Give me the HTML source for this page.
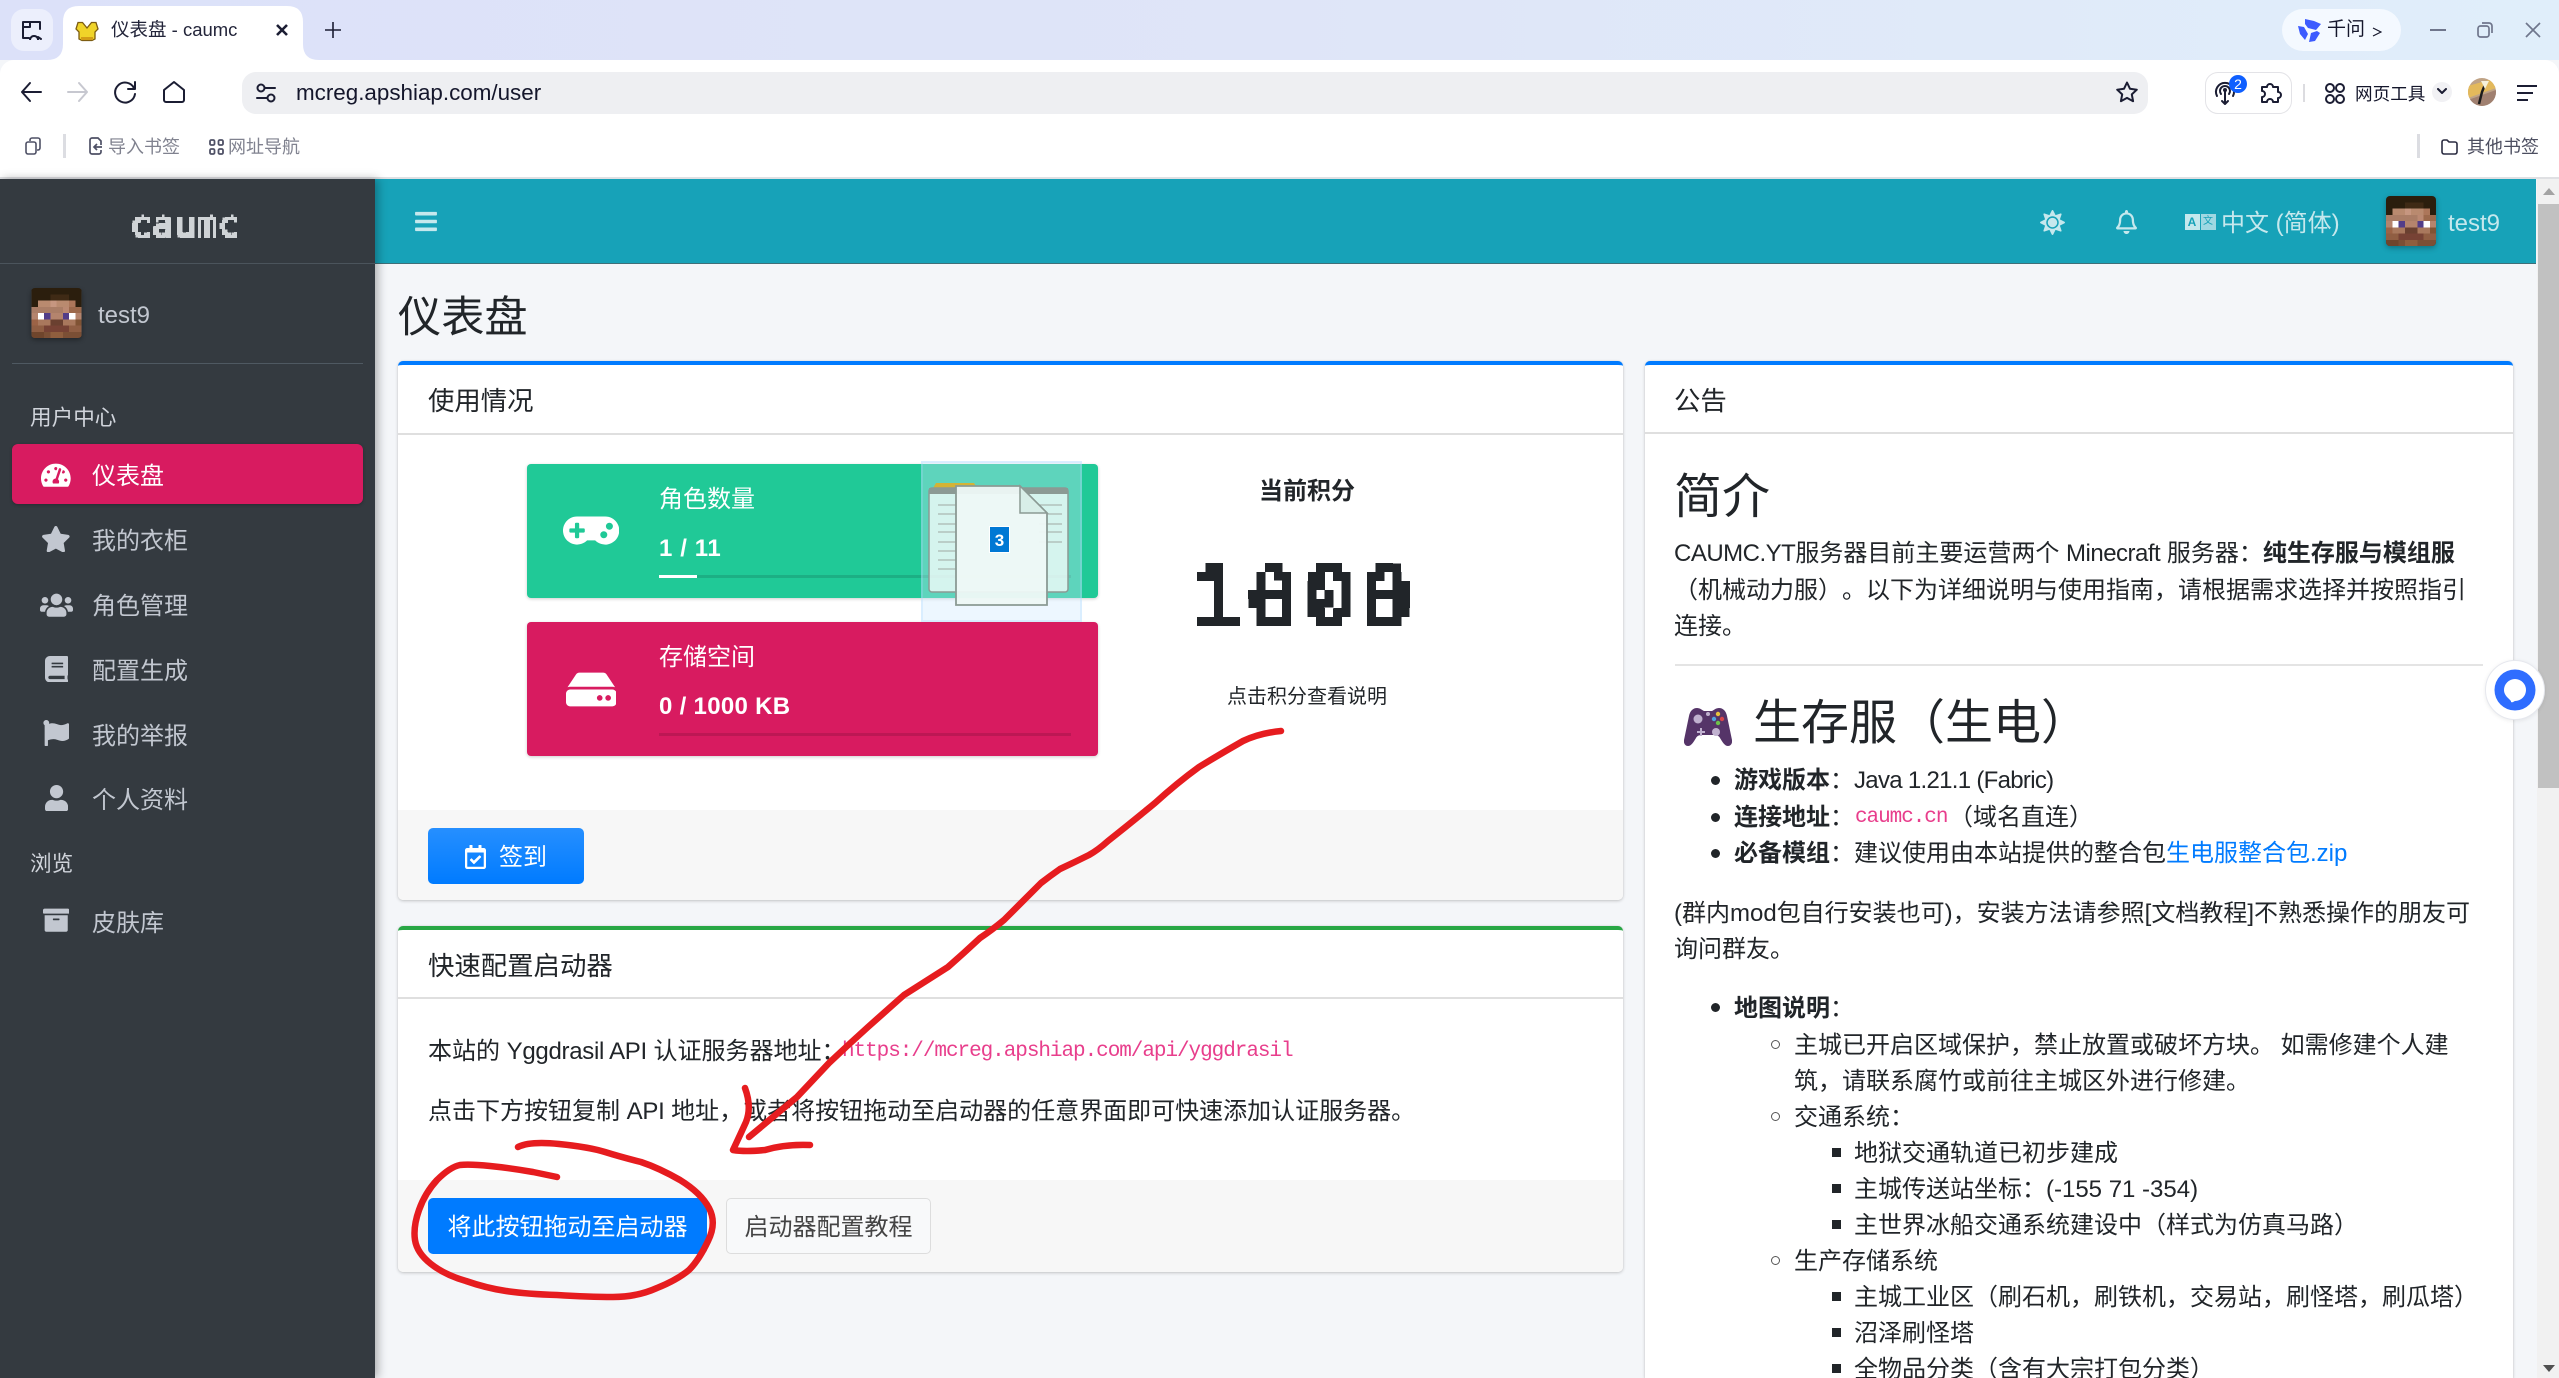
<!DOCTYPE html>
<html lang="zh-CN"><head><meta charset="utf-8"><title>仪表盘 - caumc</title>
<style>
html,body{margin:0;padding:0;background:#f4f6f9;width:2559px;height:1378px;overflow:hidden}
#p{position:relative;width:2559px;height:1378px;overflow:hidden;font-family:"Liberation Sans","Noto Sans CJK SC",sans-serif;color:#212529;font-size:24px;background:#f4f6f9;text-spacing-trim:space-all}
#p div,#p svg,#p span.a{position:absolute}
.t{white-space:nowrap;line-height:36px;height:36px;margin-top:2px;margin-left:-1px}
.c{margin-left:0}
.side{color:#c2c7d0}
.m{font-family:"Liberation Mono",monospace;color:#e83e8c;font-size:21px;letter-spacing:-1.05px}
.l{letter-spacing:-.5px}
.j{letter-spacing:-.7px}
.y{letter-spacing:-.3px}
b{font-weight:700}
.card{background:#fff;border-radius:5px;box-shadow:0 0 1px rgba(0,0,0,.13),0 1px 3px rgba(0,0,0,.2);box-sizing:border-box;overflow:hidden}
.foot{background:#f7f7f7;left:0;right:0}
.hl{left:0;right:0;height:1.5px;background:#dfdfdf}
.dot{width:9px;height:9px;border-radius:50%;background:#212529}
.ring{width:9px;height:9px;border-radius:50%;border:1.5px solid #555;box-sizing:border-box}
.sq{width:9px;height:9px;background:#212529}
.ct{color:#80828f;font-size:18px;line-height:30px;height:30px;white-space:nowrap}
.ch{fill:none;stroke:#1b1d33;stroke-width:2;stroke-linecap:round;stroke-linejoin:round}
</style></head><body><div id="p">
<svg width="0" height="0" style="left:0;top:0">
<defs>
<symbol id="steve" viewBox="0 0 8 8" shape-rendering="crispEdges">
<rect width="8" height="8" fill="#2b1e0d"/>
<rect x="3" y="1" width="3" height="1" fill="#3f2a15"/>
<rect x="1" y="2" width="6" height="1" fill="#b98a6f"/><rect x="3" y="2" width="1" height="1" fill="#c69680"/><rect x="6" y="2" width="1" height="1" fill="#ac765a"/>
<rect y="3" width="8" height="1" fill="#aa7d66"/><rect x="5" y="3" width="1" height="1" fill="#bb8972"/><rect x="6" y="3" width="2" height="1" fill="#9c694c"/>
<rect y="4" width="8" height="1" fill="#b4846d"/><rect x="1" y="4" width="1" height="1" fill="#fff"/><rect x="2" y="4" width="1" height="1" fill="#523d89"/><rect x="5" y="4" width="1" height="1" fill="#523d89"/><rect x="6" y="4" width="1" height="1" fill="#fff"/>
<rect y="5" width="8" height="1" fill="#a9785d"/><rect x="3" y="5" width="2" height="1" fill="#6a4030"/><rect x="7" y="5" width="1" height="1" fill="#805334"/><rect y="5" width="1" height="1" fill="#9c6346"/>
<rect y="6" width="8" height="1" fill="#905e43"/><rect x="2" y="6" width="4" height="1" fill="#774235"/>
<rect y="7" width="8" height="1" fill="#7b4f35"/><rect x="0" y="7" width="2" height="1" fill="#6f452c"/><rect x="3" y="7" width="2" height="1" fill="#8f5e3e"/>
</symbol>
<filter id="px9" x="-5%" y="-5%" width="110%" height="110%" color-interpolation-filters="sRGB">
<feFlood x="4" y="4" width="1" height="1" flood-color="#000"/><feComposite width="9" height="9"/><feTile result="a"/>
<feComposite in="SourceGraphic" in2="a" operator="in"/><feComponentTransfer><feFuncA type="discrete" tableValues="0 1 1"/></feComponentTransfer><feMorphology operator="dilate" radius="4"/>
</filter>
<filter id="px3" x="-5%" y="-5%" width="110%" height="110%" color-interpolation-filters="sRGB">
<feFlood x="1" y="1" width="1" height="1" flood-color="#000"/><feComposite width="3" height="3"/><feTile result="a"/>
<feComposite in="SourceGraphic" in2="a" operator="in"/><feComponentTransfer><feFuncA type="discrete" tableValues="0 1 1"/></feComponentTransfer><feMorphology operator="dilate" radius="1"/>
</filter>
</defs>
</svg>

<!-- browser chrome -->
<div style="left:0;top:0;width:2559px;height:60px;background:linear-gradient(90deg,#dce1f9 0%,#dfe5f8 50%,#e0eefa 100%)"></div>
<div style="left:11px;top:9px;width:42px;height:42px;background:#eceffc;border-radius:13px"></div>
<svg style="left:20px;top:20px" width="24" height="20" viewBox="0 0 24 20"><path class="ch" d="M9 18H3V2h17v7M3 7h7V2M14 16a4 4 0 1 0 .1 0M18 17l3 2" fill="none"/></svg>
<div style="left:0;top:60px;width:2559px;height:118px;background:#fff;border-radius:14px 14px 0 0"></div>
<svg style="left:45px;top:6px" width="276" height="56" viewBox="0 0 276 56"><path fill="#fff" d="M0 54H2Q18 54 18 38V16Q18 0 34 0H242Q258 0 258 16V38Q258 54 274 54H276V56H0Z"/></svg>
<svg style="left:75px;top:21px" width="24" height="21" viewBox="0 0 24 21"><path fill="#f0d429" stroke="#7d5d12" stroke-width="1.300" d="M3 1.500h4.500L12 7l4.500-5.500H21l2 6.500-3 3v7l-3 1.500H7l-3-1.500v-7L1 8z"/><path fill="#d39e16" d="M6 16h12v3H6z"/></svg>
<div class="t c" style="left:111px;top:10px;font-size:18.5px;color:#23253a;width:127px;overflow:hidden">仪表盘 - caumc</div>
<svg style="left:275px;top:23px" width="14" height="14"><path d="M2 2l10 10M12 2L2 12" stroke="#1b1d33" stroke-width="2.6" fill="none"/></svg>
<svg style="left:324px;top:21px" width="18" height="18"><path d="M9 1v16M1 9h16" stroke="#1b1d33" stroke-width="1.6" fill="none"/></svg>

<svg style="left:20px;top:80px" width="22" height="24"><path class="ch" d="M21 12H2M10 3l-8 9 8 9"/></svg>
<svg style="left:67px;top:80px" width="22" height="24"><path class="ch" style="stroke:#c7c8d0" d="M1 12h19M12 3l8 9-8 9"/></svg>
<svg style="left:114px;top:80px" width="24" height="24"><path class="ch" d="M20 8a10 10 0 1 0 1 6M21 2v7h-7"/></svg>
<svg style="left:162px;top:80px" width="24" height="24"><path class="ch" d="M2 10l10-8 10 8v10a2 2 0 0 1-2 2H4a2 2 0 0 1-2-2z"/></svg>
<div style="left:242px;top:72px;width:1906px;height:42px;background:#eeeff2;border-radius:14px"></div>
<svg style="left:256px;top:83px" width="20" height="20"><g class="ch" stroke-width="1.8"><circle cx="5" cy="5" r="3.5"/><path d="M9 5h10M1 15h10"/><circle cx="15" cy="15" r="3.5"/></g></svg>
<div class="t c" style="left:296px;top:73px;font-size:22.4px;color:#14162b">mcreg.apshiap.com/user</div>
<svg style="left:2116px;top:81px" width="22" height="22" viewBox="0 0 22 22"><path class="ch" d="M11 1.5l3 6.3 6.8.9-5 4.7 1.3 6.8-6.1-3.3-6.1 3.3 1.3-6.8-5-4.7 6.8-.9z"/></svg>
<div style="left:2205px;top:72px;width:87px;height:42px;border:1.5px solid #e3e3e7;border-radius:13px;box-sizing:border-box"></div>
<svg style="left:2212px;top:80px" width="28" height="26" viewBox="0 0 28 26"><g class="ch" stroke-width="1.7"><path d="M5 16a9 9 0 1 1 16 0M9 14a5 5 0 1 1 8 0M13 10v14M10 21l3 3 3-3"/></g><circle cx="13" cy="10" r="2" fill="#1b1d33"/></svg>
<div style="left:2229px;top:75px;width:18px;height:18px;border-radius:50%;background:#0f5fff;color:#fff;font-size:14px;line-height:18px;text-align:center">2</div>
<svg style="left:2260px;top:80px" width="24" height="24" viewBox="0 0 24 24"><path class="ch" d="M2 7h5a3 3 0 1 1 6 0h5v5a3 3 0 1 1 0 6v4h-5a3 3 0 1 0-6 0H2v-5a3 3 0 1 0 0-6z" stroke-width="2"/></svg>
<div style="left:2303px;top:84px;width:1.5px;height:18px;background:#dcdce0"></div>
<svg style="left:2325px;top:82px" width="20" height="24"><g class="ch" stroke-width="2"><circle cx="5" cy="6" r="4"/><circle cx="15" cy="6" r="4"/><circle cx="5" cy="17" r="4"/><circle cx="15" cy="17" r="4"/></g></svg>
<div class="t c" style="left:2355px;top:74px;font-size:17.6px;color:#14162b">网页工具</div>
<div style="left:2432px;top:82px;width:20px;height:20px;border-radius:50%;background:#f1f1f4"></div>
<svg style="left:2437px;top:88px" width="10" height="8"><path d="M1 1l4 4 4-4" class="ch"/></svg>
<svg style="left:2468px;top:78px" width="28" height="28" viewBox="0 0 28 28"><defs><clipPath id="av"><circle cx="14" cy="14" r="14"/></clipPath></defs><g clip-path="url(#av)"><rect width="28" height="28" fill="#bfa386"/><path d="M0 8L28 0v10L0 20z" fill="#e3b95c"/><path d="M0 22L28 12v16H0z" fill="#a08070"/><path d="M18 4l-4 10-3 12" stroke="#1c1c1c" stroke-width="2.5" fill="none"/><path d="M13 3h8l-4 8z" fill="#f5f1da"/></g></svg>
<svg style="left:2516px;top:84px" width="22" height="18"><path d="M1 2h20M1 9h16M1 16h11" stroke="#1b1d33" stroke-width="2" fill="none"/></svg>

<div style="left:2282px;top:9px;width:119px;height:42px;background:#f4f9ff;border-radius:21px"></div>
<svg style="left:2297px;top:18px" width="24" height="24" viewBox="0 0 24 24"><path fill="#3d5bff" d="M8 1l9 2 7 3-5 6-8-2-3-4zM1 8l6 1 4 7-3 6-5-6zM14 15l6-2 3 2-5 8-6 1z"/></svg>
<div class="t c" style="left:2327px;top:10px;font-size:19px;color:#14162b">千问</div>
<svg style="left:2372px;top:27px" width="10" height="10"><path d="M1 1l8 4-8 4" fill="none" stroke="#14162b" stroke-width="1.2"/></svg>
<div style="left:2430px;top:29px;width:16px;height:2px;background:#6f768c"></div>
<svg style="left:2477px;top:22px" width="16" height="16"><g fill="none" stroke="#6f768c" stroke-width="1.7"><rect x="1" y="4" width="11" height="11" rx="2.5"/><path d="M5 1h7a3 3 0 0 1 3 3v7"/></g></svg>
<svg style="left:2525px;top:22px" width="16" height="16"><path d="M1 1l14 14M15 1L1 15" stroke="#6f768c" stroke-width="1.7"/></svg>

<svg style="left:25px;top:137px" width="16" height="18"><g fill="none" stroke="#4f5166" stroke-width="1.6"><rect x="1" y="5" width="10" height="12" rx="2" fill="#fff"/><path d="M5 4V3a2 2 0 0 1 2-2h6a2 2 0 0 1 2 2v8a2 2 0 0 1-2 2h-1"/></g></svg>
<div style="left:63px;top:134px;width:2.5px;height:24px;background:#dcdde2"></div>
<svg style="left:89px;top:137px" width="14" height="18"><path fill="none" stroke="#4f5166" stroke-width="1.7" d="M12 8V4L9 1H3a2 2 0 0 0-2 2v12a2 2 0 0 0 2 2h7a2 2 0 0 0 2-2v-2M13 10H6M8 7l-3 3 3 3"/></svg>
<div class="ct" style="left:108px;top:132px">导入书签</div>
<svg style="left:209px;top:139px" width="15" height="16"><g fill="none" stroke="#4f5166" stroke-width="1.8"><rect x="1" y="1" width="4.5" height="5" rx="1.3"/><rect x="9.5" y="1" width="4.5" height="5" rx="1.3"/><rect x="1" y="10" width="4.5" height="5" rx="1.3"/><rect x="9.5" y="10" width="4.5" height="5" rx="1.3"/></g></svg>
<div class="ct" style="left:228px;top:132px">网址导航</div>
<div style="left:2417px;top:134px;width:2.5px;height:24px;background:#dcdde2"></div>
<svg style="left:2441px;top:139px" width="17" height="16"><path fill="none" stroke="#2b2d42" stroke-width="1.6" d="M1 3a2 2 0 0 1 2-2h3l2 2h6a2 2 0 0 1 2 2v8a2 2 0 0 1-2 2H3a2 2 0 0 1-2-2z"/></svg>
<div class="ct" style="left:2467px;top:132px;color:#4c4e60">其他书签</div>
<div style="left:0;top:177px;width:2559px;height:2px;background:#dfe0e3"></div>

<!-- scrollbar -->
<div style="left:2537px;top:179px;width:22px;height:1199px;background:#f1f1f1"></div>
<div style="left:2538px;top:204px;width:21px;height:584px;background:#c1c1c1"></div>
<svg style="left:2542px;top:187px" width="14" height="9"><path d="M7 1l6 7H1z" fill="#a3a3a3"/></svg>
<svg style="left:2542px;top:1364px" width="14" height="9"><path d="M1 1h12L7 8z" fill="#505050"/></svg>

<!-- header -->
<div style="left:375px;top:179px;width:2161px;height:85px;background:#17a2b8;border-bottom:1.5px solid #3f6f78;box-sizing:border-box"></div>
<svg style="left:415px;top:209px" width="22" height="25" viewBox="0 0 448 512"><path fill="#c5e8ed" d="M16 132h416c8.837 0 16-7.163 16-16V76c0-8.837-7.163-16-16-16H16C7.163 60 0 67.163 0 76v40c0 8.837 7.163 16 16 16zm0 160h416c8.837 0 16-7.163 16-16v-40c0-8.837-7.163-16-16-16H16c-8.837 0-16 7.163-16 16v40c0 8.837 7.163 16 16 16zm0 160h416c8.837 0 16-7.163 16-16v-40c0-8.837-7.163-16-16-16H16c-8.837 0-16 7.163-16 16v40c0 8.837 7.163 16 16 16z"/></svg>
<svg style="left:2039.5px;top:209.5px" width="25" height="25" viewBox="0 0 512 512"><path fill="#c5e8ed" d="M256 160c-52.9 0-96 43.1-96 96s43.1 96 96 96 96-43.1 96-96-43.1-96-96-96zm246.4 80.5l-94.7-47.3 33.5-100.4c4.5-13.6-8.4-26.5-21.9-21.9l-100.4 33.5-47.4-94.8c-6.4-12.8-24.6-12.8-31 0l-47.3 94.7L92.7 70.8c-13.6-4.5-26.5 8.4-21.9 21.9l33.5 100.4-94.7 47.4c-12.8 6.4-12.8 24.6 0 31l94.7 47.3-33.5 100.5c-4.5 13.6 8.4 26.5 21.9 21.9l100.4-33.5 47.3 94.7c6.4 12.8 24.6 12.8 31 0l47.3-94.7 100.4 33.5c13.6 4.5 26.5-8.4 21.9-21.9l-33.5-100.4 94.7-47.3c13-6.5 13-24.7.2-31.1zm-155.9 106c-49.9 49.9-131.1 49.9-181 0-49.9-49.9-49.9-131.1 0-181 49.9-49.9 131.1-49.9 181 0 49.9 49.9 49.9 131.1 0 181z"/></svg>
<svg style="left:2115.5px;top:210px" width="21" height="24" viewBox="0 0 448 512"><path fill="#c5e8ed" d="M439.39 362.29c-19.32-20.76-55.47-51.99-55.47-154.29 0-77.7-54.48-139.9-127.94-155.16V32c0-17.67-14.32-32-31.98-32s-31.98 14.33-31.98 32v20.84C118.56 68.1 64.08 130.3 64.08 208c0 102.3-36.15 133.53-55.47 154.29-6 6.45-8.66 14.16-8.61 21.71.11 16.4 12.98 32 32.1 32h383.8c19.12 0 32-15.6 32.1-32 .05-7.55-2.61-15.27-8.61-21.71zM67.53 368c21.22-27.97 44.42-74.33 44.53-159.42 0-.2-.06-.38-.06-.58 0-61.86 50.14-112 112-112s112 50.14 112 112c0 .2-.06.38-.06.58.11 85.1 23.31 131.46 44.53 159.42H67.53zM224 512c35.32 0 63.97-28.65 63.97-64H160.03c0 35.35 28.65 64 63.97 64z"/></svg>
<div style="left:2184.5px;top:214px;width:15px;height:16px;background:#c5e8ed;color:#17a2b8;font-size:12px;font-weight:700;line-height:16px;text-align:center">A</div>
<div style="left:2200.5px;top:214px;width:15px;height:16px;background:#9fd8e2;color:#17a2b8;font-size:10px;line-height:16px;text-align:center">文</div>
<div class="t c" style="left:2221px;top:204px;color:#c5e8ed">中文 (简体)</div>
<svg style="left:2386px;top:196px;border-radius:4px;box-shadow:0 2px 6px rgba(0,0,0,.3)" width="50" height="50"><use href="#steve" width="50" height="50"/></svg>
<div class="t c" style="left:2448px;top:204px;color:#c5e8ed">test9</div>

<!-- sidebar -->
<div style="left:0;top:179px;width:375px;height:1199px;background:#343a40;box-shadow:3px 0 9px rgba(0,0,0,.3)"></div>
<div style="left:0;top:263px;width:375px;height:1px;background:#4b545c"></div>
<svg style="left:126px;top:196px;filter:url(#px3)" width="120" height="52"><text x="4" y="41" font-family="DejaVu Sans Mono" font-size="36.5" fill="#cfd3d6" stroke="#cfd3d6" stroke-width="1.5">caumc</text></svg>
<svg style="left:31px;top:288px;border-radius:4px;box-shadow:0 2px 5px rgba(0,0,0,.35)" width="51" height="50"><use href="#steve" width="51" height="50"/></svg>
<div class="t side c" style="left:98px;top:296px">test9</div>
<div style="left:12px;top:363px;width:351px;height:1px;background:#4f5962"></div>
<div class="t c" style="left:30px;top:398px;font-size:21.6px;color:#d0d4db">用户中心</div>
<div style="left:12px;top:444px;width:351px;height:60px;background:#d81b60;border-radius:6px;box-shadow:0 1px 3px rgba(0,0,0,.25)"></div>
<svg style="left:41px;top:462px" width="29.7" height="26.4" viewBox="0 0 576 512"><path fill="#fff" d="M288 32C128.94 32 0 160.94 0 320c0 52.8 14.25 102.26 39.06 144.8 5.61 9.62 16.3 15.2 27.44 15.2h443c11.14 0 21.83-5.58 27.44-15.2C561.75 422.26 576 372.8 576 320c0-159.06-128.94-288-288-288zm0 64c14.71 0 26.58 10.13 30.32 23.65-1.11 2.26-2.64 4.23-3.45 6.67l-9.22 27.67c-5.13 3.49-10.97 6.01-17.64 6.01-17.67 0-32-14.33-32-32S270.33 96 288 96zM96 384c-17.67 0-32-14.33-32-32s14.33-32 32-32 32 14.33 32 32-14.33 32-32 32zm48-160c-17.67 0-32-14.33-32-32s14.33-32 32-32 32 14.33 32 32-14.33 32-32 32zm246.77-72.41l-61.33 184C343.13 347.33 352 364.54 352 384c0 11.72-3.38 22.55-8.88 32H232.88c-5.5-9.45-8.88-20.28-8.88-32 0-33.94 26.5-61.43 59.9-63.59l61.34-184.01c4.17-12.56 17.73-19.45 30.36-15.17 12.57 4.19 19.35 17.79 15.17 30.36zm14.66 57.2l15.52-46.55c3.47-1.29 7.13-2.23 11.05-2.23 17.67 0 32 14.33 32 32s-14.33 32-32 32c-11.38-.01-20.89-6.28-26.57-15.22zM480 384c-17.67 0-32-14.33-32-32s14.33-32 32-32 32 14.33 32 32-14.33 32-32 32z"/></svg>
<div class="t" style="left:93px;top:457px;color:#fff">仪表盘</div>
<svg style="left:41px;top:526px" width="29.7" height="26.4" viewBox="0 0 576 512"><path fill="#c2c7d0" d="M259.3 17.8L194 150.2 47.9 171.5c-26.2 3.8-36.7 36.1-17.7 54.6l105.7 103-25 145.5c-4.5 26.3 23.2 46 46.4 33.7L288 439.6l130.7 68.7c23.2 12.2 50.9-7.4 46.4-33.7l-25-145.5 105.7-103c19-18.5 8.5-50.8-17.7-54.6L382 150.2 316.7 17.8c-11.7-23.6-45.6-23.9-57.4 0z"/></svg>
<div class="t side" style="left:93px;top:522px">我的衣柜</div>
<svg style="left:39.5px;top:592px" width="33" height="26.4" viewBox="0 0 640 512"><path fill="#c2c7d0" d="M96 224c35.3 0 64-28.7 64-64s-28.7-64-64-64-64 28.7-64 64 28.7 64 64 64zm448 0c35.3 0 64-28.7 64-64s-28.7-64-64-64-64 28.7-64 64 28.7 64 64 64zm32 32h-64c-17.6 0-33.5 7.1-45.1 18.6 40.3 22.1 68.9 62 75.1 109.4h66c17.7 0 32-14.3 32-32v-32c0-35.3-28.7-64-64-64zm-256 0c61.9 0 112-50.1 112-112S381.9 32 320 32 208 82.1 208 144s50.1 112 112 112zm76.8 32h-8.3c-20.8 10-43.9 16-68.5 16s-47.6-6-68.5-16h-8.3C179.6 288 128 339.6 128 403.2V432c0 26.5 21.5 48 48 48h288c26.5 0 48-21.5 48-48v-28.8c0-63.6-51.6-115.2-115.2-115.2zm-223.7-13.4C161.5 263.1 145.6 256 128 256H64c-35.3 0-64 28.7-64 64v32c0 17.7 14.3 32 32 32h65.9c6.3-47.4 34.9-87.3 75.2-109.4z"/></svg>
<div class="t side" style="left:93px;top:587px">角色管理</div>
<svg style="left:44.5px;top:656px" width="23.1" height="26.4" viewBox="0 0 448 512"><path fill="#c2c7d0" d="M448 360V24c0-13.3-10.7-24-24-24H96C43 0 0 43 0 96v320c0 53 43 96 96 96h328c13.3 0 24-10.7 24-24v-16c0-7.5-3.5-14.3-8.9-18.7-4.2-15.4-4.2-59.3 0-74.7 5.4-4.3 8.9-11.1 8.9-18.6zM128 134c0-3.3 2.7-6 6-6h212c3.3 0 6 2.7 6 6v20c0 3.3-2.7 6-6 6H134c-3.3 0-6-2.7-6-6v-20zm0 64c0-3.3 2.7-6 6-6h212c3.3 0 6 2.7 6 6v20c0 3.3-2.7 6-6 6H134c-3.3 0-6-2.7-6-6v-20zm253.4 250H96c-17.7 0-32-14.3-32-32 0-17.6 14.4-32 32-32h285.4c-1.9 17.1-1.9 46.9 0 64z"/></svg>
<div class="t side" style="left:93px;top:652px">配置生成</div>
<svg style="left:43px;top:720px" width="26.4" height="26.4" viewBox="0 0 512 512"><path fill="#c2c7d0" d="M349.565 98.783C295.978 98.783 251.721 64 184.348 64c-24.955 0-47.309 4.384-68.045 12.013a55.947 55.947 0 0 0 3.586-23.562C118.117 24.015 94.806 1.206 66.338.048 34.345-1.254 8 24.296 8 56c0 19.026 9.497 35.825 24 45.945V488c0 13.255 10.745 24 24 24h16c13.255 0 24-10.745 24-24v-94.4c28.311-12.064 63.582-22.122 114.435-22.122 53.588 0 97.844 34.783 165.217 34.783 48.169 0 86.667-16.294 122.505-40.858C506.84 359.452 512 349.571 512 339.045v-243.1c0-23.393-24.269-38.87-45.485-29.016-34.338 15.948-76.454 31.854-116.95 31.854z"/></svg>
<div class="t side" style="left:93px;top:717px">我的举报</div>
<svg style="left:44.5px;top:785px" width="23.1" height="26.4" viewBox="0 0 448 512"><path fill="#c2c7d0" d="M224 256c70.7 0 128-57.3 128-128S294.7 0 224 0 96 57.3 96 128s57.3 128 128 128zm89.6 32h-16.7c-22.2 10.2-46.9 16-72.9 16s-50.6-5.8-72.9-16h-16.7C60.2 288 0 348.2 0 422.4V464c0 26.5 21.5 48 48 48h352c26.5 0 48-21.5 48-48v-41.6c0-74.2-60.2-134.4-134.4-134.4z"/></svg>
<div class="t side" style="left:93px;top:781px">个人资料</div>
<div class="t c" style="left:30px;top:844px;font-size:21.6px;color:#d0d4db">浏览</div>
<svg style="left:43px;top:907px" width="26.4" height="26.4" viewBox="0 0 512 512"><path fill="#c2c7d0" d="M32 448c0 17.7 14.3 32 32 32h384c17.7 0 32-14.3 32-32V160H32v288zm160-212c0-6.6 5.4-12 12-12h104c6.6 0 12 5.4 12 12v8c0 6.6-5.4 12-12 12H204c-6.6 0-12-5.4-12-12v-8zM480 32H32C14.3 32 0 46.3 0 64v48c0 8.8 7.2 16 16 16h480c8.8 0 16-7.2 16-16V64c0-17.7-14.3-32-32-32z"/></svg>
<div class="t side" style="left:93px;top:904px">皮肤库</div>

<!-- content -->
<div class="t c" style="left:398px;top:291px;height:50px;line-height:50px;font-size:43.2px">仪表盘</div>

<!-- card 1 -->
<div class="card" style="left:398px;top:361px;width:1225px;height:539px;border-top:4.5px solid #007bff">
  <div class="hl" style="top:68px"></div>
  <div class="foot" style="top:445px;height:90px"></div>
</div>
<div class="t" style="left:429px;top:381px;font-size:26.4px">使用情况</div>
<div style="left:527px;top:464px;width:571px;height:134px;background:#20c997;border-radius:4px;box-shadow:0 1px 3px rgba(0,0,0,.2)"></div>
<svg style="left:563px;top:507.5px" width="56.25" height="45" viewBox="0 0 640 512"><path fill="#fff" d="M480.07 96H160a160 160 0 1 0 114.24 272h91.52A160 160 0 1 0 480.07 96zM248 268a12 12 0 0 1-12 12h-52v52a12 12 0 0 1-12 12h-24a12 12 0 0 1-12-12v-52H84a12 12 0 0 1-12-12v-24a12 12 0 0 1 12-12h52v-52a12 12 0 0 1 12-12h24a12 12 0 0 1 12 12v52h52a12 12 0 0 1 12 12zm216 76a40 40 0 1 1 40-40 40 40 0 0 1-40 40zm64-96a40 40 0 1 1 40-40 40 40 0 0 1-40 40z"/></svg>
<div class="t c" style="left:659px;top:480px;color:#fff">角色数量</div>
<div class="t c" style="left:659px;top:529px;color:#fff;font-weight:700;letter-spacing:.6px">1 / 11</div>
<div style="left:659px;top:575px;width:412px;height:3px;background:rgba(0,0,0,.125)"></div>
<div style="left:659px;top:575px;width:38px;height:3px;background:#fff"></div>
<div style="left:527px;top:622px;width:571px;height:134px;background:#d81b60;border-radius:4px;box-shadow:0 1px 3px rgba(0,0,0,.2)"></div>
<svg style="left:565.5px;top:666.5px" width="50.6" height="45" viewBox="0 0 576 512"><path fill="#fff" d="M576 304v96c0 26.51-21.49 48-48 48H48c-26.51 0-48-21.49-48-48v-96c0-26.51 21.49-48 48-48h480c26.51 0 48 21.49 48 48zm-48-80a79.557 79.557 0 0 1 30.777 6.165L462.25 85.374A48.003 48.003 0 0 0 422.311 64H153.689a48 48 0 0 0-39.939 21.374L17.223 230.165A79.557 79.557 0 0 1 48 224h480zm-48 96c-17.673 0-32 14.327-32 32s14.327 32 32 32 32-14.327 32-32-14.327-32-32-32zm-96 0c-17.673 0-32 14.327-32 32s14.327 32 32 32 32-14.327 32-32-14.327-32-32-32z"/></svg>
<div class="t c" style="left:659px;top:638px;color:#fff">存储空间</div>
<div class="t c" style="left:659px;top:687px;color:#fff;font-weight:700;letter-spacing:.3px">0 / 1000 KB</div>
<div style="left:659px;top:733px;width:412px;height:3px;background:rgba(0,0,0,.125)"></div>

<div class="t c" style="left:1207px;top:472px;width:200px;text-align:center;font-weight:700">当前积分</div>
<svg style="left:1180px;top:540px;filter:url(#px9);transform-origin:14px 90px;transform:scale(1.048)" width="245" height="100"><text x="12" y="87" font-family="DejaVu Sans Mono" font-size="78" letter-spacing="7" fill="#212529" stroke="#212529" stroke-width="3">1000</text></svg>
<div class="t c" style="left:1207px;top:677px;width:200px;text-align:center;font-size:20px">点击积分查看说明</div>

<div style="left:428px;top:828px;width:156px;height:56px;background:linear-gradient(#268fff,#007bff);border-radius:5px"></div>
<svg style="left:465px;top:845px" width="21" height="24" viewBox="0 0 448 512"><path fill="#fff" d="M400 64h-48V12c0-6.627-5.373-12-12-12h-40c-6.627 0-12 5.373-12 12v52H160V12c0-6.627-5.373-12-12-12h-40c-6.627 0-12 5.373-12 12v52H48C21.49 64 0 85.49 0 112v352c0 26.51 21.49 48 48 48h352c26.51 0 48-21.49 48-48V112c0-26.51-21.49-48-48-48zm-6 400H54a6 6 0 0 1-6-6V160h352v298a6 6 0 0 1-6 6zm-52.849-200.65L198.842 404.519c-4.705 4.667-12.303 4.637-16.971-.068l-75.091-75.699c-4.667-4.705-4.637-12.303.068-16.971l22.719-22.536c4.705-4.667 12.303-4.637 16.97.069l44.104 44.461 111.072-110.181c4.705-4.667 12.303-4.637 16.971.068l22.536 22.718c4.667 4.705 4.636 12.303-.069 16.97z"/></svg>
<div class="t c" style="left:499px;top:838px;color:#fff">签到</div>

<!-- card 2 -->
<div class="card" style="left:398px;top:926px;width:1225px;height:346px;border-top:4.5px solid #28a745">
  <div class="hl" style="top:67px"></div>
  <div class="foot" style="top:250px;height:92px"></div>
</div>
<div class="t" style="left:429px;top:946px;font-size:26.4px">快速配置启动器</div>
<div class="t" style="left:429px;top:1032px">本站的 <span class="y">Yggdrasil API</span> 认证服务器地址：</div>
<div class="t m" style="left:843px;top:1032px">https://mcreg.apshiap.com/api/yggdrasil</div>
<div class="t" style="left:429px;top:1092px">点击下方按钮复制 <span class="y">API</span> 地址，或者将按钮拖动至启动器的任意界面即可快速添加认证服务器。</div>
<div style="left:428px;top:1198px;width:279px;height:56px;line-height:60px;background:#007bff;border-radius:5px;color:#fff;text-align:center;font-size:24px;white-space:nowrap;overflow:hidden">将此按钮拖动至启动器</div>
<div style="left:726px;top:1198px;width:205px;height:56px;line-height:57px;background:#f8f9fa;border:1.5px solid #ddd;box-sizing:border-box;border-radius:5px;color:#444;text-align:center;white-space:nowrap;overflow:hidden">启动器配置教程</div>

<!-- card 3 -->
<div class="card" style="left:1645px;top:361px;width:868px;height:1017px;border-top:4.5px solid #007bff;border-radius:5px 5px 0 0">
  <div class="hl" style="top:67px"></div>
  <div style="left:30px;width:808px;top:299px;height:1.5px;background:#e4e4e4"></div>
</div>
<div class="t" style="left:1675px;top:381px;font-size:26.4px">公告</div>
<div class="t" style="left:1675px;top:466px;height:60px;line-height:60px;font-size:48px">简介</div>
<div class="t" style="left:1675px;top:534px;"><span class="l">CAUMC.YT</span>服务器目前主要运营两个 <span class="l">Minecraft</span> 服务器：<b>纯生存服与模组服</b></div>
<div class="t" style="left:1675px;top:571px">（机械动力服）。以下为详细说明与使用指南，请根据需求选择并按照指引</div>
<div class="t" style="left:1675px;top:607px">连接。</div>
<svg style="left:1684px;top:708px" width="48" height="38" viewBox="0 0 48 38"><path fill="#553468" d="M13 0c3 0 5 2 7 3h8c2-1 4-3 7-3 4 0 7 3 8 8l5 24c.5 3-1 6-4 6-3 0-5-3-8-8-1-2-3-3-6-3H18c-3 0-5 1-6 3-3 5-5 8-8 8-3 0-4.500-3-4-6L5 8c1-5 4-8 8-8z"/><circle cx="14" cy="11" r="4.500" fill="#c0b1cf"/><circle cx="32" cy="24" r="4" fill="#c0b1cf"/><path d="M17 20v8M13 24h8" stroke="#c0b1cf" stroke-width="2"/><circle cx="24" cy="6" r="2" fill="#c0b1cf"/><circle cx="34" cy="6" r="2.200" fill="#e8c23e"/><circle cx="30" cy="11" r="2.200" fill="#4fa3e0"/><circle cx="38" cy="11" r="2.200" fill="#d8444a"/><circle cx="34" cy="15" r="2.200" fill="#6cc24a"/></svg>
<div class="t" style="left:1754px;top:692px;height:60px;line-height:60px;font-size:48px">生存服（生电）</div>

<div class="dot" style="left:1711px;top:776px"></div>
<div class="t" style="left:1735px;top:761px"><b>游戏版本</b>：<span class="j">Java 1.21.1 (Fabric)</span></div>
<div class="dot" style="left:1711px;top:813px"></div>
<div class="t" style="left:1735px;top:798px"><b>连接地址</b>：</div>
<div class="t m" style="left:1856px;top:798px">caumc.cn</div>
<div class="t" style="left:1950px;top:798px">（域名直连）</div>
<div class="dot" style="left:1711px;top:849px"></div>
<div class="t" style="left:1735px;top:834px"><b>必备模组</b>：建议使用由本站提供的整合包<span style="color:#007bff">生电服整合包.zip</span></div>
<div class="t" style="left:1675px;top:894px">(群内mod包自行安装也可)，安装方法请参照[文档教程]不熟悉操作的朋友可</div>
<div class="t" style="left:1675px;top:930px">询问群友。</div>
<div class="dot" style="left:1711px;top:1003px"></div>
<div class="t" style="left:1735px;top:989px"><b>地图说明</b>：</div>
<div class="ring" style="left:1771px;top:1040px"></div>
<div class="t" style="left:1795px;top:1026px">主城已开启区域保护，禁止放置或破坏方块。 如需修建个人建</div>
<div class="t" style="left:1795px;top:1062px">筑，请联系腐竹或前往主城区外进行修建。</div>
<div class="ring" style="left:1771px;top:1112px"></div>
<div class="t" style="left:1795px;top:1098px">交通系统：</div>
<div class="sq" style="left:1832px;top:1148px"></div>
<div class="t" style="left:1855px;top:1134px">地狱交通轨道已初步建成</div>
<div class="sq" style="left:1832px;top:1184px"></div>
<div class="t" style="left:1855px;top:1170px">主城传送站坐标：(-155 71 -354)</div>
<div class="sq" style="left:1832px;top:1220px"></div>
<div class="t" style="left:1855px;top:1206px">主世界冰船交通系统建设中（样式为仿真马路）</div>
<div class="ring" style="left:1771px;top:1256px"></div>
<div class="t" style="left:1795px;top:1242px">生产存储系统</div>
<div class="sq" style="left:1832px;top:1292px"></div>
<div class="t" style="left:1855px;top:1278px">主城工业区（刷石机，刷铁机，交易站，刷怪塔，刷瓜塔）</div>
<div class="sq" style="left:1832px;top:1328px"></div>
<div class="t" style="left:1855px;top:1314px">沼泽刷怪塔</div>
<div class="sq" style="left:1832px;top:1364px"></div>
<div class="t" style="left:1855px;top:1350px;height:26px;overflow:hidden">全物品分类（含有大宗打包分类）</div>

<!-- floating widget -->
<div style="left:2485px;top:660px;width:60px;height:60px;border-radius:50%;background:#fff;border:1px solid #e6e8ee;box-sizing:border-box;box-shadow:0 1px 4px rgba(0,0,0,.08)"></div>
<svg style="left:2494px;top:669px" width="42" height="42" viewBox="0 0 42 42"><circle cx="21" cy="21" r="20.500" fill="#2f6dff"/><path d="M10 21a11 11 0 1 1 11 11c-1 0-2 2-4 1 1-2-7-5-7-12z" fill="#fff"/></svg>

<!-- drag ghost -->
<div style="left:921px;top:461px;width:161px;height:161px;background:rgba(204,232,255,.36);box-sizing:border-box;border:2px solid rgba(170,217,255,.28)"></div>
<svg style="left:921px;top:461px" width="161" height="161" viewBox="0 0 161 161">
<path d="M12 27l3-5h38l3 5z" fill="#d3b336"/>
<rect x="8" y="27" width="139" height="104" rx="3" fill="rgba(255,255,255,.74)" stroke="#8b9a94" stroke-width="1.500"/>
<rect x="8" y="27" width="139" height="6" fill="#8b9a94"/>
<g stroke="#aab7b1" stroke-width="1.300"><path d="M17 44h18M17 53h18M17 63h18M17 71h18M17 81h18M17 90h18M17 99h18M17 108h18M118 44h23M118 53h23M118 63h23M118 71h23M118 81h23"/></g>
<path d="M35 25H99L126 52V144H35z" fill="rgba(238,248,246,.95)" stroke="#8b9a94" stroke-width="1.800"/>
<path d="M99 25V52H126z" fill="#d8eee8" stroke="#8b9a94" stroke-width="1.500"/>
<rect x="68.500" y="65.500" width="20" height="26" fill="#0078d4" stroke="#fff" stroke-width="1"/>
<text x="78.500" y="85" text-anchor="middle" font-family="Liberation Sans" font-weight="700" font-size="17" fill="#fff">3</text>
</svg>

<!-- red annotations -->
<svg style="left:0;top:0" width="2559" height="1378" viewBox="0 0 2559 1378" fill="none" stroke="#e61c1f" stroke-width="6.500" stroke-linecap="round" stroke-linejoin="round">
<path d="M1281 731Q1260 733 1243 741Q1222 753 1199 767Q1177 783 1155 803Q1132 822 1108 841Q1098 850 1089 855Q1075 862 1060 869Q1050 876 1041 883Q1022 902 1004 920Q992 930 980 938Q964 953 948 967Q926 981 904 995Q886 1011 868 1027Q848 1045 829 1063Q813 1080 797 1097Q773 1117 749 1137"/>
<path d="M745 1088Q752 1107 746 1122Q741 1133 733 1150Q745 1152 765 1150Q785 1144 810 1145"/>
<path d="M518 1147Q530 1141 559 1144Q589 1147 605 1152Q621 1157 641 1162Q659 1168 680 1180Q701 1193 709 1208Q717 1223 708 1241Q699 1260 689 1270Q677 1280 657 1288Q637 1297 613 1297Q589 1297 557 1295Q526 1294 506 1291Q486 1288 466 1281Q445 1275 431 1264Q417 1253 415 1240Q413 1227 419 1210Q425 1193 437 1180Q450 1167 460 1165Q470 1164 490 1166Q510 1168 533 1172L557 1177"/>
</svg>
</div></body></html>
